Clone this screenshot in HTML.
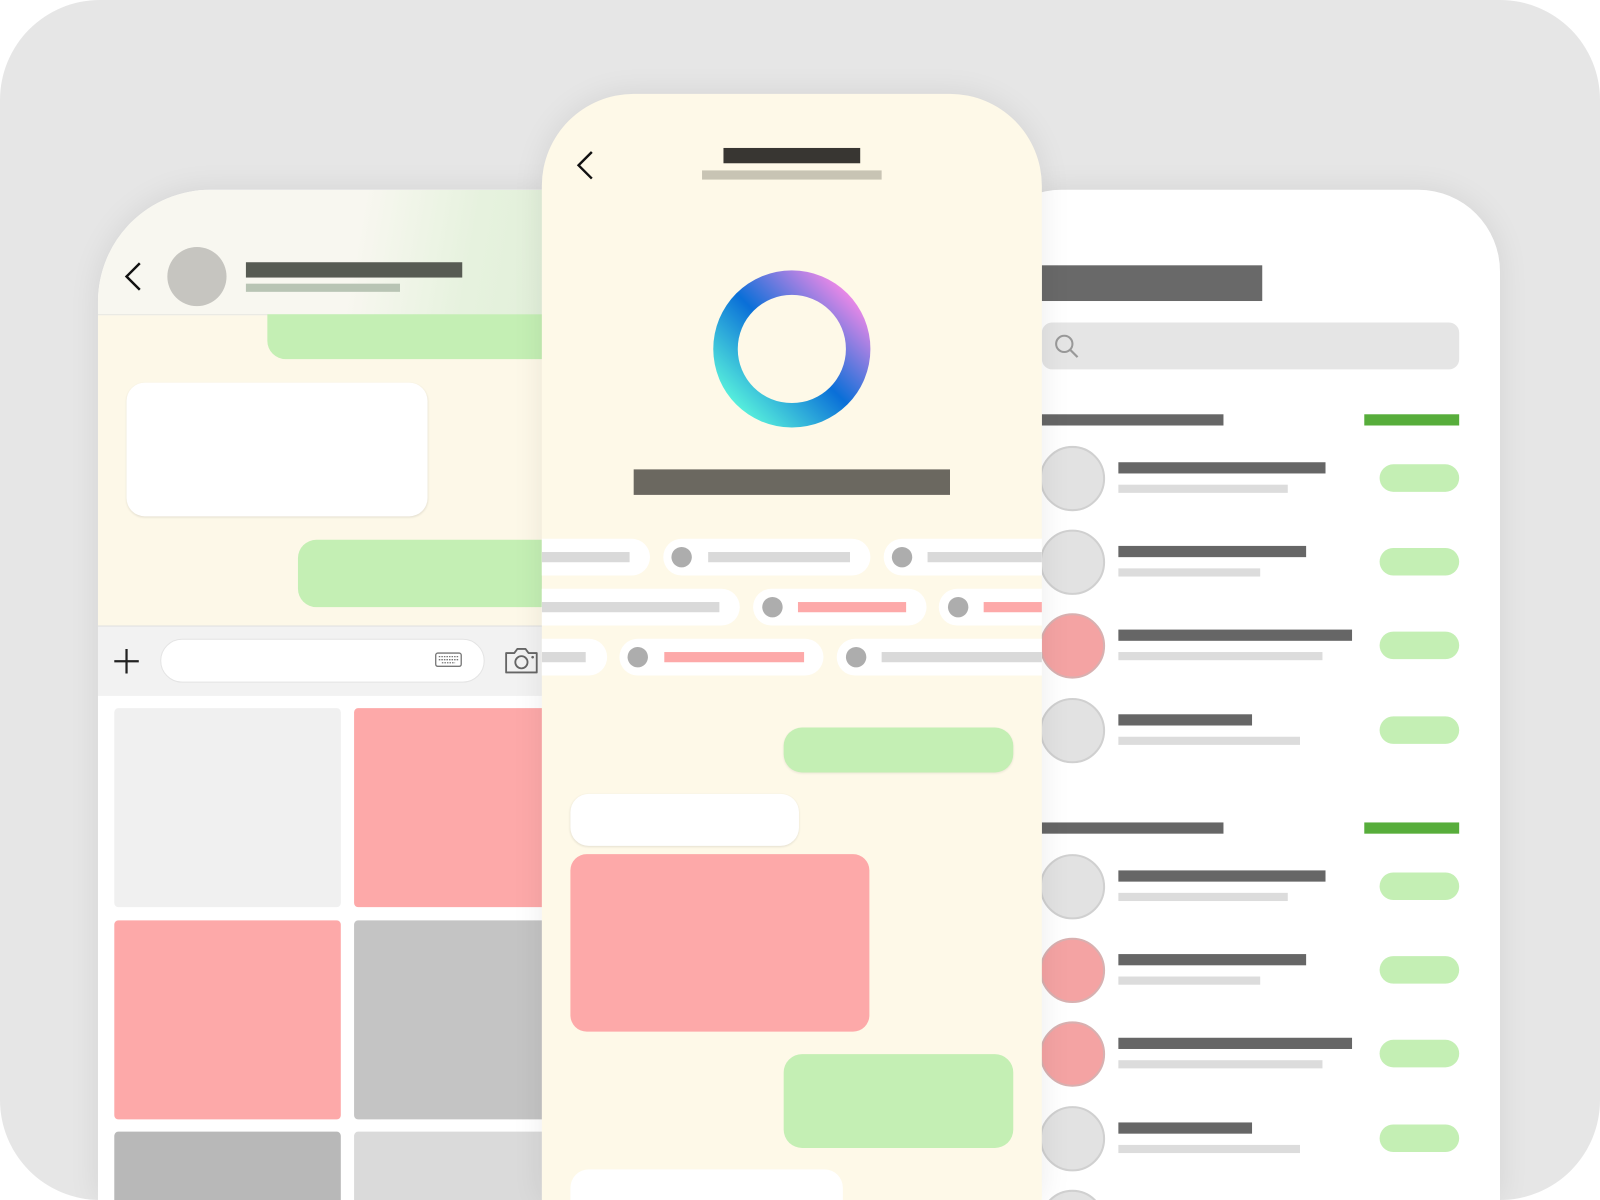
<!DOCTYPE html>
<html><head><meta charset="utf-8"><style>
html,body{margin:0;padding:0;width:1600px;height:1200px;overflow:hidden;background:#fff;}
#w{position:absolute;left:0;top:0;width:1600px;height:1200px;overflow:hidden;}
#s{position:absolute;left:0;top:0;width:1568px;height:1176px;transform:scale(1.020408);transform-origin:0 0;overflow:hidden;}
.a{position:absolute;}
.bg{left:0;top:0;width:1568px;height:1176px;background:#e6e6e6;border-radius:98px;overflow:hidden;}
.pill{position:absolute;background:#fff;border-radius:20px;height:36px;}
.dot{position:absolute;width:20px;height:20px;border-radius:50%;background:#adadad;top:8px;}
.pb{position:absolute;height:10px;top:13px;}
</style></head><body><div id="w"><div id="s">
<div class="a bg">
<!-- left phone -->
<div class="a" style="left:96px;top:186px;width:560px;height:990px;border-radius:110px 110px 0 0;overflow:hidden;background:#fff;box-shadow:0 0 30px rgba(0,0,0,0.08);">
 <div class="a" style="left:0;top:0;width:560px;height:122px;background:linear-gradient(100deg,#f8f7f0 45%,#e6f2de 65%,#dcecd4 100%);border-bottom:1px solid #e4e4dc;"></div>
 <svg class="a" style="left:22px;top:70px" width="24" height="30"><path d="M19 2 L6 15 L19 28" stroke="#111" stroke-width="2.4" fill="none"/></svg>
 <div class="a" style="left:68px;top:56px;width:58px;height:58px;border-radius:50%;background:#c6c5c0;"></div>
 <div class="a" style="left:145px;top:71px;width:212px;height:15px;background:#575b53;"></div>
 <div class="a" style="left:145px;top:92px;width:151px;height:8px;background:#b8c4b4;"></div>
 <div class="a" style="left:0;top:123px;width:560px;height:304px;background:#fdf8e8;"></div>
 <div class="a" style="left:166px;top:122px;width:400px;height:44px;background:#c4efb4;border-radius:0 0 0 18px;"></div>
 <div class="a" style="left:28px;top:189px;width:295px;height:131px;background:#fff;border-radius:18px;box-shadow:0 1px 2px rgba(0,0,0,0.1);"></div>
 <div class="a" style="left:196px;top:343px;width:400px;height:66px;background:#c4efb4;border-radius:18px;"></div>
 <div class="a" style="left:0;top:427px;width:560px;height:69px;background:#f2f2f2;border-top:1px solid #e0e0e0;"></div>
 <svg class="a" style="left:14px;top:448px" width="28" height="28"><path d="M14 2V26M2 14H26" stroke="#222" stroke-width="2.2"/></svg>
 <div class="a" style="left:61px;top:440px;width:318px;height:43px;background:#fff;border-radius:22px;border:1px solid #e4e4e4;box-sizing:border-box;"></div>
 <svg class="a" style="left:330px;top:453px" width="28" height="16"><rect x="1" y="1" width="25" height="13" rx="2" fill="none" stroke="#777" stroke-width="1.3"/><path d="M4 4.5h19M4 7.5h19M7 10.5h13" stroke="#777" stroke-width="1.3" stroke-dasharray="1.5 1"/></svg>
 <svg class="a" style="left:398px;top:447px" width="34" height="28"><path d="M2 7h8l3-4h8l3 4h8v19H2z" fill="none" stroke="#666" stroke-width="1.8" stroke-linejoin="round"/><circle cx="17" cy="16" r="6" fill="none" stroke="#666" stroke-width="1.8"/><circle cx="28" cy="11" r="1.3" fill="#666"/></svg>
 <div class="a" style="left:0;top:496px;width:560px;height:500px;background:#fff;"></div>
 <div class="a" style="left:16px;top:508px;width:222px;height:195px;background:#f0f0f0;border-radius:4px;"></div>
 <div class="a" style="left:251px;top:508px;width:222px;height:195px;background:#fda9a9;border-radius:4px;"></div>
 <div class="a" style="left:16px;top:716px;width:222px;height:195px;background:#fda9a9;border-radius:4px;"></div>
 <div class="a" style="left:251px;top:716px;width:222px;height:195px;background:#c4c4c4;border-radius:4px;"></div>
 <div class="a" style="left:16px;top:923px;width:222px;height:195px;background:#b8b8b8;border-radius:4px;"></div>
 <div class="a" style="left:251px;top:923px;width:222px;height:195px;background:#dadada;border-radius:4px;"></div>
</div>
<!-- right phone -->
<div class="a" style="left:960px;top:186px;width:510px;height:990px;border-radius:80px 80px 0 0;background:#fff;box-shadow:0 0 30px rgba(0,0,0,0.08);overflow:hidden;">
 <div class="a" style="left:61px;top:74px;width:216px;height:35px;background:#696969;"></div>
 <div class="a" style="left:61px;top:130px;width:409px;height:46px;background:#e5e5e5;border-radius:10px;"></div>
 <svg class="a" style="left:72px;top:140px" width="28" height="28"><circle cx="11" cy="11" r="8" fill="none" stroke="#999" stroke-width="2"/><path d="M17 17L24 24" stroke="#999" stroke-width="2.2"/></svg>
 <div class="a" style="left:61px;top:220px;width:178px;height:11px;background:#666;"></div>
 <div class="a" style="left:377px;top:220px;width:93px;height:11px;background:#57ad3b;"></div>
 <div class="a" style="left:61px;top:620px;width:178px;height:11px;background:#666;"></div>
 <div class="a" style="left:377px;top:620px;width:93px;height:11px;background:#57ad3b;"></div>
</div>
<!-- right phone rows -->
<div class="a" style="left:1019px;top:0;width:420px;height:1176px;">
 <div class="a" style="left:0;top:437px;width:60px;height:60px;border-radius:50%;background:#e2e2e2;border:2px solid #d0d0d0;"></div>
 <div class="a" style="left:77px;top:453px;width:203px;height:11px;background:#666"></div><div class="a" style="left:77px;top:475px;width:166px;height:8px;background:#dcdcdc"></div><div class="a" style="left:333px;top:455px;width:78px;height:27px;border-radius:14px;background:#c4efb4"></div>
 <div class="a" style="left:0;top:519px;width:60px;height:60px;border-radius:50%;background:#e2e2e2;border:2px solid #d0d0d0;"></div>
 <div class="a" style="left:77px;top:535px;width:184px;height:11px;background:#666"></div><div class="a" style="left:77px;top:557px;width:139px;height:8px;background:#dcdcdc"></div><div class="a" style="left:333px;top:537px;width:78px;height:27px;border-radius:14px;background:#c4efb4"></div>
 <div class="a" style="left:0;top:601px;width:60px;height:60px;border-radius:50%;background:#f4a3a3;border:2px solid #d8b0b0;"></div>
 <div class="a" style="left:77px;top:617px;width:229px;height:11px;background:#666"></div><div class="a" style="left:77px;top:639px;width:200px;height:8px;background:#dcdcdc"></div><div class="a" style="left:333px;top:619px;width:78px;height:27px;border-radius:14px;background:#c4efb4"></div>
 <div class="a" style="left:0;top:684px;width:60px;height:60px;border-radius:50%;background:#e2e2e2;border:2px solid #d0d0d0;"></div>
 <div class="a" style="left:77px;top:700px;width:131px;height:11px;background:#666"></div><div class="a" style="left:77px;top:722px;width:178px;height:8px;background:#dcdcdc"></div><div class="a" style="left:333px;top:702px;width:78px;height:27px;border-radius:14px;background:#c4efb4"></div>
 <div class="a" style="left:0;top:837px;width:60px;height:60px;border-radius:50%;background:#e2e2e2;border:2px solid #d0d0d0;"></div>
 <div class="a" style="left:77px;top:853px;width:203px;height:11px;background:#666"></div><div class="a" style="left:77px;top:875px;width:166px;height:8px;background:#dcdcdc"></div><div class="a" style="left:333px;top:855px;width:78px;height:27px;border-radius:14px;background:#c4efb4"></div>
 <div class="a" style="left:0;top:919px;width:60px;height:60px;border-radius:50%;background:#f4a3a3;border:2px solid #d8b0b0;"></div>
 <div class="a" style="left:77px;top:935px;width:184px;height:11px;background:#666"></div><div class="a" style="left:77px;top:957px;width:139px;height:8px;background:#dcdcdc"></div><div class="a" style="left:333px;top:937px;width:78px;height:27px;border-radius:14px;background:#c4efb4"></div>
 <div class="a" style="left:0;top:1001px;width:60px;height:60px;border-radius:50%;background:#f4a3a3;border:2px solid #d8b0b0;"></div>
 <div class="a" style="left:77px;top:1017px;width:229px;height:11px;background:#666"></div><div class="a" style="left:77px;top:1039px;width:200px;height:8px;background:#dcdcdc"></div><div class="a" style="left:333px;top:1019px;width:78px;height:27px;border-radius:14px;background:#c4efb4"></div>
 <div class="a" style="left:0;top:1084px;width:60px;height:60px;border-radius:50%;background:#e2e2e2;border:2px solid #d0d0d0;"></div>
 <div class="a" style="left:77px;top:1100px;width:131px;height:11px;background:#666"></div><div class="a" style="left:77px;top:1122px;width:178px;height:8px;background:#dcdcdc"></div><div class="a" style="left:333px;top:1102px;width:78px;height:27px;border-radius:14px;background:#c4efb4"></div>
 <div class="a" style="left:0;top:1166px;width:60px;height:60px;border-radius:50%;background:#e2e2e2;border:2px solid #d0d0d0;"></div>
</div>
<!-- middle phone -->
<div class="a" style="left:531px;top:92px;width:490px;height:1084px;border-radius:90px 90px 0 0;background:#fef9e8;overflow:hidden;box-shadow:0 0 30px rgba(0,0,0,0.08);">
 <svg class="a" style="left:30px;top:55px" width="24" height="30"><path d="M19 2 L6 15 L19 28" stroke="#111" stroke-width="2.4" fill="none"/></svg>
 <div class="a" style="left:178px;top:53px;width:134px;height:15px;background:#383632;"></div>
 <div class="a" style="left:157px;top:75px;width:176px;height:9px;background:#c8c4b4;"></div>
 <div class="a" style="left:168px;top:173px;width:154px;height:154px;border-radius:50%;background:linear-gradient(45deg,#5cf8dc 12%,#0a6fd8 50%,#f98ae8 88%);"></div>
 <div class="a" style="left:192px;top:197px;width:106px;height:106px;border-radius:50%;background:#fef9e8;"></div>
 <div class="a" style="left:90px;top:368px;width:310px;height:25px;background:#6b6860;"></div>
 <div class="pill" style="left:-40px;top:436px;width:146px;"><div class="pb" style="left:40px;width:86px;background:#d9d9d9"></div></div>
 <div class="pill" style="left:119px;top:436px;width:203px;"><div class="dot" style="left:8px"></div><div class="pb" style="left:44px;width:139px;background:#d9d9d9"></div></div>
 <div class="pill" style="left:335px;top:436px;width:200px;"><div class="dot" style="left:8px"></div><div class="pb" style="left:43px;width:160px;background:#d9d9d9"></div></div>
 <div class="pill" style="left:-40px;top:485px;width:234px;"><div class="pb" style="left:40px;width:174px;background:#d9d9d9"></div></div>
 <div class="pill" style="left:207px;top:485px;width:170px;"><div class="dot" style="left:9px"></div><div class="pb" style="left:44px;width:106px;background:#fda9a9"></div></div>
 <div class="pill" style="left:389px;top:485px;width:200px;"><div class="dot" style="left:9px"></div><div class="pb" style="left:44px;width:160px;background:#fda9a9"></div></div>
 <div class="pill" style="left:-40px;top:534px;width:104px;"><div class="pb" style="left:40px;width:43px;background:#d9d9d9"></div></div>
 <div class="pill" style="left:76px;top:534px;width:200px;"><div class="dot" style="left:8px"></div><div class="pb" style="left:44px;width:137px;background:#fda9a9"></div></div>
 <div class="pill" style="left:289px;top:534px;width:220px;"><div class="dot" style="left:9px"></div><div class="pb" style="left:44px;width:180px;background:#d9d9d9"></div></div>
 <div class="a" style="left:237px;top:621px;width:225px;height:44px;background:#c4efb4;border-radius:18px;box-shadow:0 1px 2px rgba(0,0,0,0.08);"></div>
 <div class="a" style="left:28px;top:686px;width:224px;height:51px;background:#fff;border-radius:18px;box-shadow:0 1px 2px rgba(0,0,0,0.1);"></div>
 <div class="a" style="left:28px;top:745px;width:293px;height:174px;background:#fda9a9;border-radius:16px;"></div>
 <div class="a" style="left:237px;top:941px;width:225px;height:92px;background:#c4efb4;border-radius:18px;"></div>
 <div class="a" style="left:28px;top:1054px;width:267px;height:80px;background:#fff;border-radius:18px;"></div>
</div>
</div>
</div></div></body></html>
